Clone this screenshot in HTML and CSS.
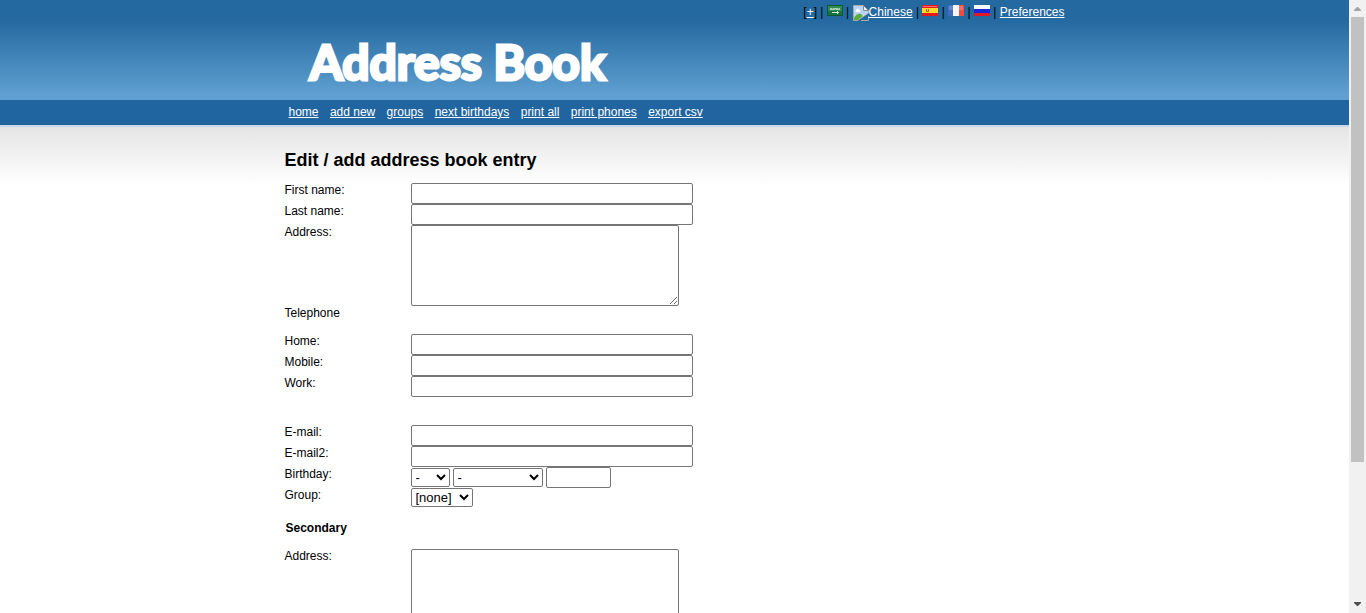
FILE: index.html
```html
<!DOCTYPE html>
<html lang="en">
<head>
<meta charset="utf-8">
<title>Address Book</title>
<link rel="stylesheet" href="styles.css">
</head>
<body>
<div class="page">
  <header class="banner">
    <div class="wrap">
      <div class="languages">[<a href="#">+</a>] |
        <a href="#" aria-label="Arabic"><svg class="flag" viewBox="0 0 16 11"><path fill="#0e5a30" d="M0 0h16v11H0z"/><path fill="#2f8a56" d="M1 1h14v9H1z"/><path fill="#1b7040" d="M1 6h14v4H1z"/><path fill="#a9d3b8" d="M3 3h10v2H3z"/><path fill="#5da77b" d="M5 3h1v1H5zM8 4h1v1H8zM11 3h1v1h-1z"/><path fill="#d5eadb" d="M5 7h7v1H5zM10 6h1v3h-1z"/></svg></a> |
        <a href="#"><svg class="broken" viewBox="0 0 16 16"><path fill="#fff" stroke="#aaa" d="M.5.500h10l5 5V8L4.500 15.500h-4z"/><path fill="#b9d3f6" d="M1 1h9v4h5v3L8 12 1 13z"/><path fill="#fff" d="M3 5.500c0-2 3-2.500 3-.5 2 0 2 2 0 2H3C2 7 2 5.500 3 5.500z"/><path fill="#5aac38" d="M1 13c2-4 5-5 7-4l2 2-5 4H1z"/><path fill="#eee" stroke="#888" d="M10.500.500v5h5z"/><path stroke="#aaa" fill="none" d="M8 15.500h7.500V11"/></svg>Chinese</a> |
        <a href="#" aria-label="Spanish"><svg class="flag" viewBox="0 0 16 11"><path fill="#e21b1b" d="M0 0h16v11H0z"/><path fill="#ffd928" d="M0 3h16v5H0z"/><path fill="#f66" d="M1 1h14v1H1z"/><path fill="#c7651e" d="M4 4h3v3H4z"/><path fill="#e6b5a0" d="M5 4h1v2H5z"/></svg></a> |
        <a href="#" aria-label="French"><svg class="flag" viewBox="0 0 16 11"><path fill="#416cc0" d="M0 0h5v11H0z"/><path fill="#f5f5f5" d="M5 0h6v11H5z"/><path fill="#ef4b43" d="M11 0h5v11h-5z"/><path fill="#fff" opacity=".2" d="M1 1h14v4H1z"/></svg></a> |
        <a href="#" aria-label="Russian"><svg class="flag" viewBox="0 0 16 11"><path fill="#f8f8f8" d="M0 0h16v4H0z"/><path fill="#1826d8" d="M0 4h16v4H0z"/><path fill="#e31822" d="M0 8h16v3H0z"/></svg></a> |
        <a href="#">Preferences</a></div>
      <div class="logo">Address Book</div>
    </div>
  </header>
  <nav class="menu">
    <div class="wrap links">
      <a href="#">home</a>
      <a href="#">add new</a>
      <a href="#">groups</a>
      <a href="#">next birthdays</a>
      <a href="#">print all</a>
      <a href="#">print phones</a>
      <a href="#">export csv</a>
    </div>
  </nav>
  <main class="content">
    <div class="wrap">
      <h1>Edit / add address book entry</h1>
      <form class="entry">
        <div class="row"><label for="first">First name:</label><input id="first" class="text"></div>
        <div class="row"><label for="last">Last name:</label><input id="last" class="text"></div>
        <div class="row"><label for="address">Address:</label><textarea id="address"></textarea></div>
        <div class="row group-title">Telephone</div>
        <div class="row"><label for="home">Home:</label><input id="home" class="text"></div>
        <div class="row"><label for="mobile">Mobile:</label><input id="mobile" class="text"></div>
        <div class="row group-end"><label for="work">Work:</label><input id="work" class="text"></div>
        <div class="row"><label for="email">E-mail:</label><input id="email" class="text"></div>
        <div class="row"><label for="email2">E-mail2:</label><input id="email2" class="text"></div>
        <div class="row"><label for="day">Birthday:</label>
          <div class="date"><select id="day" class="day"><option>-</option></select><select class="month" aria-label="Birth month"><option>-</option></select><input class="year" aria-label="Birth year"></div></div>
        <div class="row"><label for="group">Group:</label><select id="group" class="group"><option>[none]</option></select></div>
        <h2>Secondary</h2>
        <div class="row"><label for="address2">Address:</label><textarea id="address2"></textarea></div>
      </form>
    </div>
  </main>
</div>
<div class="scrollbar" aria-hidden="true">
  <svg class="arrow" viewBox="0 0 17 17"><path fill="#a3a3a3" d="M5 11V10l3-3h1l3 3v1z"/></svg>
  <div class="track"><div class="thumb"></div></div>
  <svg class="arrow" viewBox="0 0 17 17"><path fill="#505050" d="M5 6v1l3 3h1l3-3V6z"/></svg>
</div>
</body>
</html>
```
FILE: styles.css
```css
* {
  box-sizing: border-box;
}

body {
  display: flex;
  height: 100vh;
  margin: 0;
  overflow: hidden;
  background: #fff;
  color: #000;
  font: 12px/14px "Liberation Sans", Arial, sans-serif;
}

.page {
  flex: 1;
  overflow: hidden;
}

.wrap {
  max-width: 780px;
  margin: 0 auto;
}

.banner {
  height: 100px;
  background: linear-gradient(#24699f 0, #24699f 20px, #5f9fd1 94px, #5f9fd1);
}

.languages {
  height: 34px;
  padding-top: 5px;
  text-align: right;
}

.banner a,
.menu a {
  color: #fff;
}

.flag {
  width: 16px;
  height: 11px;
}

.broken {
  width: 16px;
  height: 16px;
  vertical-align: text-top;
}

.logo {
  padding-left: 25px;
  color: #fff;
  font: 700 48px/56px Lato, sans-serif;
  -webkit-text-stroke: 3px #fff;
  stroke-linejoin: round;
  white-space: nowrap;
}

.menu {
  height: 27px;
  padding-top: 5px;
  background: #2165a0;
  border-bottom: 2px solid #c9d8e8;
}

.links {
  padding-left: 4px;
}

.links a {
  margin-right: 8px;
}

.content {
  padding-top: 22px;
  background: linear-gradient(#e5e5e5, #fff 58px);
}

h1 {
  margin: 0 0 12px;
  font-size: 18px;
  line-height: 22px;
}

h2 {
  margin: 14px 0;
  padding-left: 1px;
  font-size: 12px;
  line-height: 14px;
}

.row {
  display: flex;
  align-items: flex-start;
}

.row label {
  width: 126px;
}

.group-title {
  height: 28px;
}

.group-end {
  margin-bottom: 28px;
}

input,
textarea,
select {
  margin: 0;
  background: #fff;
  border: 1px solid #767676;
  border-radius: 2px;
  color: #000;
  font: 13px "Liberation Sans", Arial, sans-serif;
}

.text {
  width: 282px;
  height: 21px;
}

textarea {
  width: 268px;
  height: 81px;
}

select {
  height: 19px;
}

.date {
  display: flex;
  align-items: center;
  gap: 3px;
}

.day {
  width: 39px;
}

.month {
  width: 90px;
}

.year {
  width: 65px;
  height: 21px;
}

.group {
  width: 62px;
}

.scrollbar {
  display: flex;
  flex-direction: column;
  width: 17px;
  background: #f1f1f1;
}

.arrow {
  width: 17px;
  height: 17px;
}

.track {
  flex: 1;
  padding: 0 2px;
}

.thumb {
  height: calc(100% * 10 / 13);
  background: #c1c1c1;
}
```
